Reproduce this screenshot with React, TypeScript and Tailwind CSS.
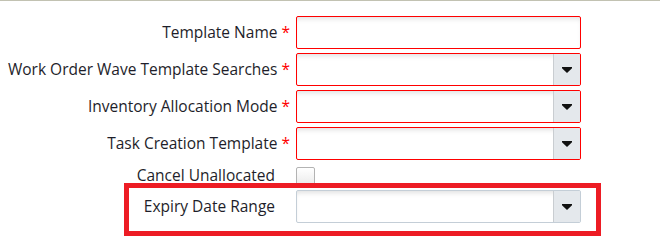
import React from 'react';

type Field = {
  label: string;
  required?: boolean;
  kind: 'text' | 'select' | 'checkbox';
};

const fields: Field[] = [
  { label: 'Template Name', required: true, kind: 'text' },
  { label: 'Work Order Wave Template Searches', required: true, kind: 'select' },
  { label: 'Inventory Allocation Mode', required: true, kind: 'select' },
  { label: 'Task Creation Template', required: true, kind: 'select' },
];

const Caret = () => (
  <svg width="10" height="6" viewBox="0 0 10 6" className="block">
    <polygon points="0,0 10,0 10,1.2 5,6 0,1.2" fill="#111" />
  </svg>
);

const Input = ({ kind, required }: { kind: 'text' | 'select'; required?: boolean }) => (
  <div
    className={`flex h-[33px] w-[285px] overflow-hidden rounded-[2px] border bg-white shadow-[inset_0_4px_5px_-2px_rgba(0,0,0,0.12)] ${
      required ? 'border-[#ff0000]' : 'border-[#c4ced7]'
    }`}
  >
    <div className="flex-1" />
    {kind === 'select' && (
      <div className="flex w-[27px] items-center justify-center border-l border-[#c9cdd1] bg-[#e4e8ec]">
        <Caret />
      </div>
    )}
  </div>
);

export default function App() {
  return (
    <div className="relative h-[248px] w-[660px] overflow-hidden border-t border-[#c2c2b2] bg-white font-['Open_Sans',sans-serif] text-[15.5px] text-[#1e1e2a]">
      <div className="flex flex-col gap-[4px] pt-[15px]">
        {fields.map((f) => (
          <div key={f.label} className="flex h-[33px] items-center">
            <div className="flex w-[296px] items-center justify-end pr-[6px]">
              <span>{f.label}</span>
              <span className="ml-[4px] text-[#ff0000]">*</span>
            </div>
            <Input kind={f.kind as 'text' | 'select'} required />
          </div>
        ))}
      </div>

      {/* Cancel Unallocated */}
      <div className="mt-[7px] flex h-[18px] items-center">
        <div className="flex w-[296px] justify-end pr-[21px]">
          <span>Cancel Unallocated</span>
        </div>
        <div className="h-[18px] w-[19px] rounded-[2px] border border-[#b3b3b3] bg-gradient-to-b from-white to-[#ececec]" />
      </div>

      {/* Expiry Date Range */}
      <div className="mt-[5px] flex h-[33px] items-center">
        <div className="flex w-[296px] justify-end pr-[21px]">
          <span>Expiry Date Range</span>
        </div>
        <Input kind="select" />
      </div>

      {/* highlight annotation */}
      <div className="pointer-events-none absolute left-[124px] top-[182px] h-[53px] w-[477px] border-[5px] border-[#ed1c24]" />
    </div>
  );
}
